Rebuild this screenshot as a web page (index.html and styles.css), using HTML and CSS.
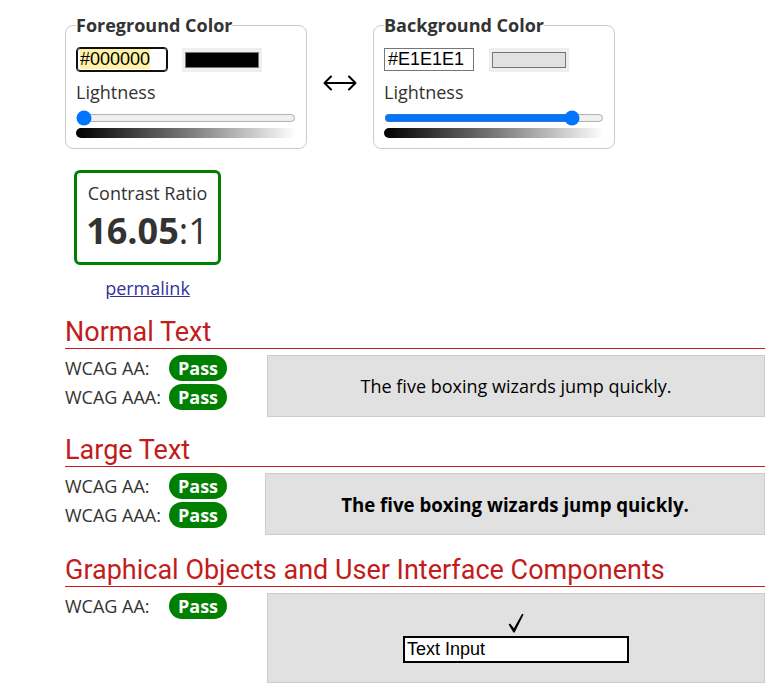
FILE: index.html
```html
<!DOCTYPE html>
<html lang="en">
<head>
<meta charset="utf-8">
<title>Contrast Checker</title>
<link rel="stylesheet" href="styles.css">
</head>
<body>
<main class="page">
  <div class="pickers">
    <fieldset class="picker">
      <legend class="picker__legend">Foreground Color</legend>
      <div class="picker__row">
        <span class="hex hex--focus"><mark class="hex__sel">#000000</mark></span>
        <span class="swatch"><span class="swatch__fill swatch__fill--fg"></span></span>
      </div>
      <div class="picker__label">Lightness</div>
      <input class="picker__range" type="range" min="0" max="100" value="0" aria-label="Foreground lightness">
      <div class="picker__gradient"></div>
    </fieldset>
    <div class="swap" aria-label="Swap colors">
      <svg width="34" height="16" viewBox="0 0 34 16" aria-hidden="true">
        <path d="M1.5 8 H32.5 M8 1.5 L1.5 8 L8 14.5 M26 1.5 L32.5 8 L26 14.5" fill="none" stroke="#000" stroke-width="2" stroke-linecap="round" stroke-linejoin="round"/>
      </svg>
    </div>
    <fieldset class="picker">
      <legend class="picker__legend">Background Color</legend>
      <div class="picker__row">
        <span class="hex">#E1E1E1</span>
        <span class="swatch"><span class="swatch__fill swatch__fill--bg"></span></span>
      </div>
      <div class="picker__label">Lightness</div>
      <input class="picker__range" type="range" min="0" max="100" value="88" aria-label="Background lightness">
      <div class="picker__gradient"></div>
    </fieldset>
  </div>

  <div class="ratio">
    <div class="ratio__box">
      <div class="ratio__title">Contrast Ratio</div>
      <div class="ratio__value"><strong>16.05</strong>:1</div>
    </div>
    <a class="ratio__link" href="#">permalink</a>
  </div>

  <section class="result">
    <h2 class="result__title">Normal Text</h2>
    <div class="result__body">
      <div class="result__checks">
        <div class="check"><span class="check__label">WCAG AA:</span><span class="badge">Pass</span></div>
        <div class="check"><span class="check__label">WCAG AAA:</span><span class="badge">Pass</span></div>
      </div>
      <div class="sample sample--normal">The five boxing wizards jump quickly.</div>
    </div>
  </section>

  <section class="result result--large">
    <h2 class="result__title">Large Text</h2>
    <div class="result__body result__body--large">
      <div class="result__checks">
        <div class="check"><span class="check__label">WCAG AA:</span><span class="badge">Pass</span></div>
        <div class="check"><span class="check__label">WCAG AAA:</span><span class="badge">Pass</span></div>
      </div>
      <div class="sample sample--large">The five boxing wizards jump quickly.</div>
    </div>
  </section>

  <section class="result result--ui">
    <h2 class="result__title">Graphical Objects and User Interface Components</h2>
    <div class="result__body">
      <div class="result__checks">
        <div class="check"><span class="check__label">WCAG AA:</span><span class="badge">Pass</span></div>
      </div>
      <div class="sample sample--ui">
        <div class="sample__tick">
          <svg width="16" height="20" viewBox="0 0 16 20" aria-hidden="true">
            <path d="M0.6 11.6 L2.1 10.4 L5.9 15.2 L14.1 0.7 L15.6 1.6 L6.6 19.4 L5.4 19.4 Z" fill="#000"/>
          </svg>
        </div>
        <div class="sample__input">Text Input</div>
      </div>
    </div>
  </section>
</main>
</body>
</html>
```
FILE: styles.css
```css
html, body {
  margin: 0;
  padding: 0;
  background: #fff;
}

body {
  font-family: "Open Sans", "DejaVu Sans", sans-serif;
  font-size: 18px;
  color: #333;
}

.page {
  padding: 13px 10px 0 65px;
}

/* ---------- colour pickers ---------- */
.pickers {
  display: flex;
  align-items: stretch;
}

.picker {
  margin: 0;
  width: 220px;
  padding: 10px 10px 10px 10px;
  border: 1px solid #cccccc;
  border-radius: 8px;
}

.picker__legend {
  padding: 0;
  font-weight: 700;
  font-size: 18px;
  line-height: 24.5px;
  color: #333;
}

.picker__row {
  display: flex;
  align-items: center;
  gap: 15px;
  height: 24px;
}

.hex {
  box-sizing: border-box;
  width: 90px;
  height: 23px;
  padding: 0 3px;
  border: 1px solid #767676;
  font-family: "Liberation Sans", Arial, sans-serif;
  font-size: 18px;
  line-height: 21px;
  color: #000;
  background: #fff;
}

.hex--focus {
  margin-left: 1px;
  border: 1px solid #101010;
  outline: 1px solid #101010;
  border-radius: 3px;
  padding: 0 2px;
}

.hex__sel {
  background: #fff1a6;
  color: #000;
}

.swatch {
  box-sizing: border-box;
  width: 80px;
  height: 24px;
  padding: 4px 3px;
  background: #efefef;
  display: flex;
}

.swatch__fill {
  flex: 1;
  border: 1px solid #767676;
}

.swatch__fill--fg { background: #000000; }
.swatch__fill--bg { background: #e1e1e1; }

.picker__label {
  margin-top: 8px;
  line-height: 24.5px;
  color: #333;
}

.picker__range {
  display: block;
  width: 220px;
  height: 16px;
  margin: 6px 0 0 0;
  accent-color: #0075ff;
}

.picker__gradient {
  margin-top: 2px;
  height: 10px;
  border-radius: 5px 0 0 5px;
  background: linear-gradient(to right, #000 0%, #777 50%, #fff 100%);
}

.swap {
  width: 66px;
  display: flex;
  align-items: center;
  justify-content: center;
  padding-top: 3px;
}

/* ---------- ratio ---------- */
.ratio {
  width: 147px;
  margin: 21px 0 0 9px;
  display: flex;
  flex-direction: column;
  align-items: center;
}

.ratio__box {
  box-sizing: border-box;
  width: 147px;
  padding: 8px 0 7px;
  border: 3px solid #008000;
  border-radius: 6px;
  text-align: center;
}

.ratio__title {
  line-height: 24.5px;
  color: #333;
}

.ratio__value {
  font-size: 36px;
  line-height: 49px;
  color: #333;
}

.ratio__value strong {
  font-weight: 700;
}

.ratio__link {
  margin-top: 11px;
  line-height: 24.5px;
  color: #333399;
  text-decoration: underline;
}

/* ---------- results ---------- */
.result {
  margin-top: 17px;
}

.result--large {
  margin-top: 18px;
}

.result--ui {
  margin-top: 20px;
}

.result__title {
  margin: 0;
  padding-bottom: 1px;
  font-family: Roboto, "Liberation Sans", sans-serif;
  font-weight: 400;
  font-size: 27px;
  line-height: 30px;
  color: #c21c1c;
  border-bottom: 1px solid #c21c1c;
}

.result__body {
  margin-top: 6px;
  display: grid;
  grid-template-columns: 202px 1fr;
  align-items: start;
}

.result__body--large {
  grid-template-columns: 200px 1fr;
}

.result__checks {
  display: flex;
  flex-direction: column;
  gap: 3px;
}

.check {
  display: flex;
  align-items: center;
  height: 26px;
}

.check__label {
  width: 104px;
  color: #333;
  line-height: 24.5px;
}

.badge {
  box-sizing: border-box;
  height: 26px;
  padding: 0 9px;
  border-radius: 13px;
  background: #008000;
  color: #fff;
  font-weight: 700;
  font-size: 18px;
  line-height: 26px;
}

.sample {
  border: 1px solid #cccccc;
  background: #e1e1e1;
  color: #000;
  text-align: center;
}

.sample--normal {
  padding: 18px 10px 17px;
  line-height: 25px;
}

.sample--large {
  padding: 18px 10px 17px;
  font-size: 18.67px;
  font-weight: 700;
  line-height: 25px;
}

.sample--ui {
  padding: 16px 10px 19px;
  display: flex;
  flex-direction: column;
  align-items: center;
}

.sample__tick {
  height: 26px;
  display: flex;
  align-items: center;
}

.sample__tick svg {
  display: block;
}

.sample__input {
  box-sizing: border-box;
  width: 226px;
  height: 27px;
  padding: 0 2px;
  border: 2px solid #000;
  background: #fff;
  text-align: left;
  font-family: "Liberation Sans", Arial, sans-serif;
  font-size: 18px;
  line-height: 23px;
  color: #000;
}
```
